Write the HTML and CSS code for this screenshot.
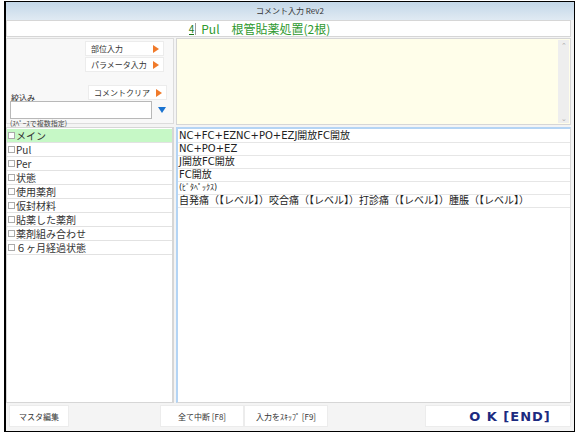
FILE: index.html
```html
<!DOCTYPE html>
<html lang="ja">
<head>
    <meta charset="UTF-8">
    <title>コメント入力 Rev2</title>
    <link rel="stylesheet" href="styles.css">
</head>
<body>
    <div class="window">
        <div class="title-bar">コメント入力 Rev2</div>
        <div class="header">
            <span class="tooth-no">4</span><span class="bar"></span>
            <span class="header-text">Pul　根管貼薬処置(2根)</span>
        </div>

        <div class="main">
            <div class="left-panel">
                <div class="filter-area">
                    <div class="side-buttons">
                        <button class="tri-btn">部位入力<span class="tri"></span></button>
                        <button class="tri-btn">パラメータ入力<span class="tri"></span></button>
                    </div>
                    <div class="filter-row">
                        <span class="filter-label">絞込み</span>
                        <button class="tri-btn">コメントクリア<span class="tri"></span></button>
                    </div>
                    <div class="search-row">
                        <div class="search-box"></div>
                        <span class="down-tri"></span>
                    </div>
                    <div class="hint">(ｽﾍﾟｰｽで複数指定)</div>
                </div>
                <ul class="category-list">
                    <li class="selected"><span class="check"></span>メイン</li>
                    <li><span class="check"></span>Pul</li>
                    <li><span class="check"></span>Per</li>
                    <li><span class="check"></span>状態</li>
                    <li><span class="check"></span>使用薬剤</li>
                    <li><span class="check"></span>仮封材料</li>
                    <li><span class="check"></span>貼薬した薬剤</li>
                    <li><span class="check"></span>薬剤組み合わせ</li>
                    <li><span class="check"></span>６ヶ月経過状態</li>
                </ul>
            </div>

            <div class="right-panel">
                <div class="memo">
                    <div class="scrollbar">
                        <span>&#8963;</span>
                        <span>&#8964;</span>
                    </div>
                </div>
                <ul class="comment-list">
                    <li>NC+FC+EZNC+PO+EZJ開放FC開放</li>
                    <li>NC+PO+EZ</li>
                    <li>J開放FC開放</li>
                    <li>FC開放</li>
                    <li class="small">(ﾋﾞﾀﾍﾟｯｸｽ)</li>
                    <li>自発痛（【レベル】）咬合痛（【レベル】）打診痛（【レベル】）腫脹（【レベル】）</li>
                </ul>
            </div>
        </div>

        <div class="footer">
            <button class="foot-btn master">マスタ編集</button>
            <div class="foot-middle">
                <button class="foot-btn">全て中断 [F8]</button>
                <button class="foot-btn">入力をｽｷｯﾌﾟ [F9]</button>
            </div>
            <button class="ok-btn">O K [END]</button>
        </div>
    </div>
</body>
</html>
```

FILE: styles.css
```css
body {
    margin: 0;
    background-color: #fff;
    font-family: "Noto Sans CJK JP", "Noto Sans", sans-serif;
    color: #222;
}
.window {
    margin: 1px 0 0 4px;
    width: 568px;
    height: 429px;
    border: 1px solid #000;
    border-left-width: 2px;
    background-color: #f4f4f4;
    display: flex;
    flex-direction: column;
}
.title-bar {
    height: 18px;
    line-height: 18px;
    text-align: center;
    font-size: 8px;
    color: #333;
    background: linear-gradient(#c3d7e8, #e0eaf3);
}
.header {
    height: 15px;
    margin: 0 3px 0 0;
    padding-right: 58px;
    background-color: #fff;
    border: 1px solid #d6d6d6;
    display: flex;
    align-items: center;
    justify-content: center;
    color: #2f9a2f;
    font-size: 12px;
}
.tooth-no {
    font-size: 10px;
    color: #1c7a1c;
    border-bottom: 1px solid #1c7a1c;
    line-height: 11px;
    margin-top: 1px;
}
.bar {
    width: 1px;
    height: 12px;
    background-color: #9c9c9c;
    margin: 0 5px 0 1px;
}
.header-text {
    line-height: 15px;
}
.main {
    flex: 1;
    display: flex;
    gap: 2px;
    padding: 1px 3px 0 0;
}
.left-panel {
    width: 168px;
    display: flex;
    flex-direction: column;
    gap: 3px;
}
.filter-area {
    height: 86px;
    border: 1px solid #dcdcdc;
    background-color: #f8f8f8;
    padding: 2px 0 0 3px;
    box-sizing: border-box;
}
.side-buttons {
    display: flex;
    flex-direction: column;
    gap: 1px;
    padding-left: 75px;
}
.tri-btn {
    width: 79px;
    height: 15px;
    background-color: #fff;
    border: 1px solid #ececec;
    font-family: inherit;
    font-size: 8px;
    color: #333;
    padding: 0 0 0 5px;
    text-align: left;
    position: relative;
    display: block;
}
.tri {
    position: absolute;
    right: 4px;
    top: 3px;
    width: 0;
    height: 0;
    border-top: 4px solid transparent;
    border-bottom: 4px solid transparent;
    border-left: 6px solid #f07a2a;
}
.filter-row {
    display: flex;
    justify-content: space-between;
    align-items: flex-end;
    margin-top: 13px;
    padding-right: 6px;
}
.filter-label {
    font-size: 8px;
    padding-left: 1px;
    line-height: 10px;
    margin-bottom: -3px;
}
.search-row {
    display: flex;
    align-items: center;
    margin-top: 1px;
    gap: 6px;
}
.search-box {
    width: 140px;
    height: 16px;
    border: 1px solid #b8b8b8;
    background-color: #fff;
}
.down-tri {
    width: 0;
    height: 0;
    border-left: 4px solid transparent;
    border-right: 4px solid transparent;
    border-top: 6px solid #1a73d0;
}
.hint {
    font-size: 7px;
    line-height: 7px;
    color: #444;
    margin-top: 1px;
}
.category-list, .comment-list {
    list-style: none;
    margin: 0;
    padding: 0;
    background-color: #fff;
}
.category-list {
    flex: 1;
    border: 1px solid #d6d6d6;
    border-right-width: 2px;
    padding-top: 1px;
}
.category-list li {
    height: 13px;
    line-height: 13px;
    border-bottom: 1px solid #e2e2e2;
    font-size: 10px;
    color: #333;
    display: flex;
    align-items: center;
    white-space: nowrap;
}
.category-list li.selected {
    background-color: #c6f8c6;
}
.check {
    width: 5px;
    height: 5px;
    border: 1px solid #aaa;
    background-color: #fff;
    margin: 0 1px 0 1px;
}
.right-panel {
    flex: 1;
    display: flex;
    flex-direction: column;
    gap: 2px;
}
.memo {
    height: 87px;
    border: 1px solid #d6d6d6;
    background-color: #fffeea;
    display: flex;
    justify-content: flex-end;
    padding: 1px 1px 1px 0;
    box-sizing: border-box;
}
.scrollbar {
    width: 11px;
    background-color: #eeeeee;
    display: flex;
    flex-direction: column;
    justify-content: space-between;
    align-items: center;
    font-size: 7px;
    color: #aaa;
    line-height: 10px;
}
.comment-list {
    flex: 1;
    border: 1px solid #d6d6d6;
    border-top: 2px solid #b4d4f4;
    border-left: 2px solid #b4d4f4;
    padding-top: 1px;
}
.comment-list li {
    height: 12px;
    line-height: 12px;
    border-bottom: 1px solid #e6e6e6;
    font-family: "DejaVu Sans", "Noto Sans CJK JP", sans-serif;
    font-size: 10px;
    color: #222;
    padding-left: 1px;
    white-space: nowrap;
}
.comment-list li.small {
    font-size: 8px;
}
.footer {
    height: 26px;
    display: flex;
    align-items: center;
    padding: 0 3px 2px 3px;
}
.foot-btn {
    height: 22px;
    background-color: #fff;
    border: 1px solid #ececec;
    font-family: inherit;
    font-size: 8px;
    color: #333;
}
.master {
    width: 60px;
}
.foot-middle {
    display: flex;
    margin-left: 91px;
}
.foot-middle .foot-btn {
    width: 84px;
}
.ok-btn {
    margin-left: auto;
    width: 146px;
    height: 22px;
    background-color: #fff;
    border: 1px solid #ececec;
    font-family: "DejaVu Sans", sans-serif;
    font-weight: bold;
    font-size: 13px;
    letter-spacing: 1px;
    color: #1c2a80;
    text-align: center;
    padding-left: 30px;
}
```
